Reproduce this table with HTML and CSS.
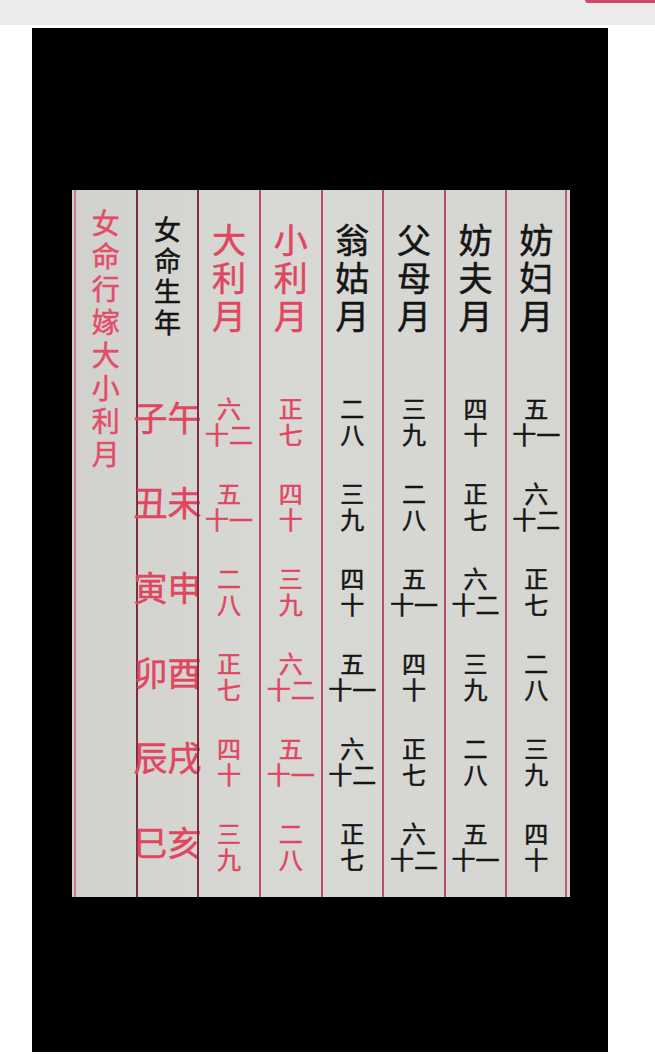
FILE: index.html
```html
<!DOCTYPE html>
<html lang="zh">
<head>
<meta charset="utf-8">
<title>女命行嫁大小利月</title>
<link rel="stylesheet" href="styles.css">
</head>
<body>
<div class="topbar"><div class="topbar-btn"></div></div>
<div class="photo">
  <div class="paper">
    <div class="col col-title red"><div class="vtext">女命行嫁大小利月</div></div>
    <div class="col dark-line">
      <div class="head head-small"><div class="vtext black">女命生年</div></div>
      <div class="cell branch red">子午</div>
      <div class="cell branch red">丑未</div>
      <div class="cell branch red">寅申</div>
      <div class="cell branch red">卯酉</div>
      <div class="cell branch red">辰戌</div>
      <div class="cell branch red">巳亥</div>
    </div>
    <div class="col dark-line red">
      <div class="head"><div class="vtext big">大利月</div></div>
      <div class="cell num"><span>六</span><span>十二</span></div>
      <div class="cell num"><span>五</span><span>十一</span></div>
      <div class="cell num"><span>二</span><span>八</span></div>
      <div class="cell num"><span>正</span><span>七</span></div>
      <div class="cell num"><span>四</span><span>十</span></div>
      <div class="cell num"><span>三</span><span>九</span></div>
    </div>
    <div class="col red">
      <div class="head"><div class="vtext big">小利月</div></div>
      <div class="cell num"><span>正</span><span>七</span></div>
      <div class="cell num"><span>四</span><span>十</span></div>
      <div class="cell num"><span>三</span><span>九</span></div>
      <div class="cell num"><span>六</span><span>十二</span></div>
      <div class="cell num"><span>五</span><span>十一</span></div>
      <div class="cell num"><span>二</span><span>八</span></div>
    </div>
    <div class="col black">
      <div class="head"><div class="vtext big">翁姑月</div></div>
      <div class="cell num"><span>二</span><span>八</span></div>
      <div class="cell num"><span>三</span><span>九</span></div>
      <div class="cell num"><span>四</span><span>十</span></div>
      <div class="cell num"><span>五</span><span>十一</span></div>
      <div class="cell num"><span>六</span><span>十二</span></div>
      <div class="cell num"><span>正</span><span>七</span></div>
    </div>
    <div class="col black">
      <div class="head"><div class="vtext big">父母月</div></div>
      <div class="cell num"><span>三</span><span>九</span></div>
      <div class="cell num"><span>二</span><span>八</span></div>
      <div class="cell num"><span>五</span><span>十一</span></div>
      <div class="cell num"><span>四</span><span>十</span></div>
      <div class="cell num"><span>正</span><span>七</span></div>
      <div class="cell num"><span>六</span><span>十二</span></div>
    </div>
    <div class="col black">
      <div class="head"><div class="vtext big">妨夫月</div></div>
      <div class="cell num"><span>四</span><span>十</span></div>
      <div class="cell num"><span>正</span><span>七</span></div>
      <div class="cell num"><span>六</span><span>十二</span></div>
      <div class="cell num"><span>三</span><span>九</span></div>
      <div class="cell num"><span>二</span><span>八</span></div>
      <div class="cell num"><span>五</span><span>十一</span></div>
    </div>
    <div class="col col-last black">
      <div class="head"><div class="vtext big">妨妇月</div></div>
      <div class="cell num"><span>五</span><span>十一</span></div>
      <div class="cell num"><span>六</span><span>十二</span></div>
      <div class="cell num"><span>正</span><span>七</span></div>
      <div class="cell num"><span>二</span><span>八</span></div>
      <div class="cell num"><span>三</span><span>九</span></div>
      <div class="cell num"><span>四</span><span>十</span></div>
    </div>
  </div>
</div>
</body>
</html>
```

FILE: styles.css
```css
* { box-sizing: border-box; }

body {
  margin: 0;
  background: #ffffff;
  font-family: "Noto Sans CJK SC", "Noto Sans", sans-serif;
  width: 655px;
  height: 1059px;
  overflow: hidden;
}

.topbar {
  height: 25px;
  background: #ebebeb;
  display: flex;
  justify-content: flex-end;
}

.topbar-btn {
  width: 70px;
  height: 3px;
  background: #d4466a;
  border-bottom-left-radius: 4px;
}

.photo {
  margin: 3px 0 0 32px;
  width: 576px;
  height: 1024px;
  background: #000000;
  padding: 162px 0 0 40px;
}

.paper {
  width: 498px;
  height: 707px;
  background: linear-gradient(90deg, #d1d1cd 0%, #d8d8d4 40%, #d5d5d1 100%);
  padding: 0 3px 0 2px;
  display: grid;
  grid-template-columns: repeat(8, 1fr);
  -webkit-text-stroke: 0.5px currentColor;
}

.col {
  display: flex;
  flex-direction: column;
  align-items: stretch;
  border-left: 2px solid #b84e6c;
  min-width: 0;
}

.col-title {
  border-left-color: #d8758e;
  align-items: center;
  padding-top: 16px;
}

.dark-line { border-left-color: #7e2c3e; }

.col-last { border-right: 2px solid #c05a78; }

.red { color: #e0465f; }
.black { color: #151515; }

.vtext {
  width: 1em;
  font-size: 27px;
  line-height: 32px;
  text-align: center;
  word-break: break-all;
}

.col-title .vtext {
  color: #e24d69;
  font-size: 28px;
  line-height: 33px;
}

.head {
  height: 188px;
  display: flex;
  justify-content: center;
  padding-top: 30px;
}

.head-small { padding-top: 23px; }
.head-small .vtext { line-height: 31px; }

.vtext.big {
  font-size: 34px;
  line-height: 38px;
}

.cell {
  height: 85px;
  display: flex;
  align-items: center;
  justify-content: center;
}

.branch {
  font-size: 34px;
  line-height: 40px;
  white-space: nowrap;
  padding-bottom: 8px;
}

.num {
  flex-direction: column;
  font-size: 24px;
  line-height: 26px;
  white-space: nowrap;
}
```
